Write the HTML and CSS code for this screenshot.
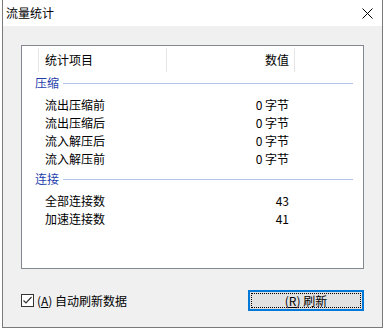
FILE: index.html
```html
<!DOCTYPE html>
<html lang="zh-CN">
<head>
    <meta charset="UTF-8">
    <title>流量统计</title>
    <link rel="stylesheet" href="styles.css">
</head>
<body>
    <div class="window">
        <div class="title-bar">
            <span class="title">流量统计</span>
            <svg class="close" width="11" height="11" viewBox="0 0 11 11">
                <path d="M0.5 0.5L10.5 10.5M10.5 0.5L0.5 10.5" stroke="#000" stroke-width="1" fill="none"/>
            </svg>
        </div>

        <div class="content">
            <div class="list">
                <div class="list-head">
                    <div class="head-cell col-blank"></div>
                    <div class="head-cell col-name">统计项目</div>
                    <div class="head-cell col-val">数值</div>
                </div>

                <div class="group">
                    <span class="group-title">压缩</span>
                    <span class="group-line"></span>
                </div>
                <div class="row"><span class="name">流出压缩前</span><span class="val">0 字节</span></div>
                <div class="row"><span class="name">流出压缩后</span><span class="val">0 字节</span></div>
                <div class="row"><span class="name">流入解压后</span><span class="val">0 字节</span></div>
                <div class="row"><span class="name">流入解压前</span><span class="val">0 字节</span></div>

                <div class="group">
                    <span class="group-title">连接</span>
                    <span class="group-line"></span>
                </div>
                <div class="row"><span class="name">全部连接数</span><span class="val">43</span></div>
                <div class="row"><span class="name">加速连接数</span><span class="val">41</span></div>
            </div>

            <div class="footer">
                <label class="check">
                    <span class="box">
                        <svg width="11" height="11" viewBox="0 0 11 11">
                            <path d="M1.5 5.5L4 8L9.5 2" stroke="#333" stroke-width="1.2" fill="none"/>
                        </svg>
                    </span>
                    <span>(<u>A</u>) 自动刷新数据</span>
                </label>
                <button class="refresh"><span class="focus">(<u>R</u>) 刷新</span></button>
            </div>
        </div>
    </div>
</body>
</html>
```

FILE: styles.css
```css
body {
    margin: 0;
    background-color: #ffffff;
    font-family: "Noto Sans CJK SC", "Noto Sans", sans-serif;
    font-size: 12px;
    color: #000;
}

.window {
    margin-left: 2px;
    width: 381px;
    height: 328px;
    box-sizing: border-box;
    border: 1px solid #7a7a7a;
    border-top: none;
    display: flex;
    flex-direction: column;
}

.title-bar {
    height: 26px;
    background-color: #ffffff;
    display: flex;
    align-items: center;
    justify-content: space-between;
    padding: 0 9px 0 3px;
}

.title {
    line-height: 16px;
}

.close {
    margin-top: 1px;
}

.content {
    flex: 1;
    background-color: #f0f0f0;
    padding: 19px 18px 0 18px;
}

.list {
    height: 224px;
    box-sizing: border-box;
    background-color: #fff;
    border: 1px solid #828790;
}

.list-head {
    display: flex;
    height: 26px;
}

.head-cell {
    box-sizing: border-box;
    margin-top: 2px;
    height: 24px;
    line-height: 24px;
    border-right: 1px solid #e5e5e5;
}

.col-blank {
    width: 17px;
}

.col-name {
    width: 128px;
    padding-left: 6px;
}

.col-val {
    width: 128px;
    text-align: right;
    padding-right: 5px;
}

.group {
    display: flex;
    align-items: center;
    height: 24px;
    padding: 0 10px 2px 13px;
    box-sizing: border-box;
}

.group-title {
    color: #1f3fae;
    line-height: 18px;
}

.group-line {
    flex: 1;
    height: 1px;
    margin-left: 4px;
    background-color: #b3c3e3;
}

.row {
    display: flex;
    height: 18px;
    line-height: 18px;
}

.name {
    width: 145px;
    box-sizing: border-box;
    padding-left: 23px;
}

.val {
    width: 127px;
    box-sizing: border-box;
    text-align: right;
    padding-right: 5px;
}

.footer {
    display: flex;
    align-items: center;
    justify-content: space-between;
    margin-top: 21px;
    height: 21px;
}

.check {
    display: flex;
    align-items: center;
    gap: 3px;
}

.box {
    width: 13px;
    height: 13px;
    box-sizing: border-box;
    border: 1px solid #333;
    background-color: #fff;
    display: flex;
    align-items: center;
    justify-content: center;
}

.refresh {
    width: 116px;
    height: 21px;
    box-sizing: border-box;
    padding: 1px;
    border: 2px solid #0078d7;
    background-color: #e1e1e1;
    font-family: inherit;
    font-size: 12px;
    display: flex;
}

.focus {
    flex: 1;
    border: 1px dotted #000;
    line-height: 13px;
    text-align: center;
}
```
